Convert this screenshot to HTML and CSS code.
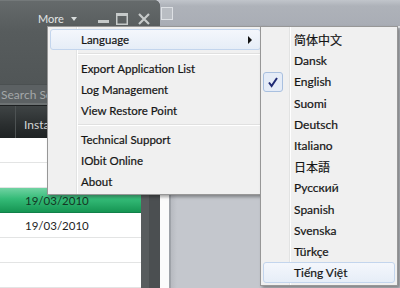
FILE: index.html
```html
<!DOCTYPE html>
<html lang="en">
<head>
    <meta charset="UTF-8">
    <meta name="viewport" content="width=device-width, initial-scale=1.0">
    <title>Uninstaller - More menu</title>
    <link rel="stylesheet" href="styles.css">
</head>
<body>
    <div class="desk">
        <!-- Main app window (left) -->
        <div class="app">
            <div class="app-head">
                <div class="titlebar">
                    <span class="more">More</span>
                    <span class="caret"></span>
                    <svg class="winbtn btn-min" width="12" height="12" viewBox="0 0 12 12"><rect x="0" y="7" width="11" height="3" fill="#c6caca"/></svg>
                    <svg class="winbtn btn-max" width="12" height="12" viewBox="0 0 12 12"><rect x="0.75" y="0.75" width="10.5" height="10.5" fill="none" stroke="#c6caca" stroke-width="1.5"/><rect x="0" y="0" width="12" height="3" fill="#c6caca"/></svg>
                    <svg class="winbtn btn-close" width="12" height="12" viewBox="0 0 12 12"><path d="M1 1 L11 11 M11 1 L1 11" stroke="#c6caca" stroke-width="2.2"/></svg>
                </div>
                <div class="search">Search Software</div>
                <div class="colhead">
                    <span class="col-check"></span>
                    <span class="col-date">Installed Date</span>
                </div>
            </div>
            <div class="app-body">
                <div class="rows">
                    <div class="row"></div>
                    <div class="row"></div>
                    <div class="row selected">19/03/2010</div>
                    <div class="row">19/03/2010</div>
                    <div class="row"></div>
                    <div class="row"></div>
                </div>
                <div class="scroll"><div class="scroll-thumb"></div></div>
            </div>
        </div>

        <!-- Window behind (right) -->
        <div class="back">
            <div class="back-title"><span class="back-max"></span></div>
            <div class="back-body">
                <div class="back-strip"></div>
                <div class="back-pane"></div>
            </div>
        </div>

        <!-- More menu -->
        <div class="menu main-menu">
            <div class="item active"><span class="gutter"></span><span class="label">Language</span><span class="arrow"></span></div>
            <div class="sep"></div>
            <div class="item"><span class="gutter"></span><span class="label">Export Application List</span></div>
            <div class="item"><span class="gutter"></span><span class="label">Log Management</span></div>
            <div class="item"><span class="gutter"></span><span class="label">View Restore Point</span></div>
            <div class="sep"></div>
            <div class="item"><span class="gutter"></span><span class="label">Technical Support</span></div>
            <div class="item"><span class="gutter"></span><span class="label">IObit Online</span></div>
            <div class="item"><span class="gutter"></span><span class="label">About</span></div>
        </div>

        <!-- Language submenu -->
        <div class="menu sub-menu">
            <div class="item"><span class="gutter"></span><span class="label cjk-sc">简体中文</span></div>
            <div class="item"><span class="gutter"></span><span class="label">Dansk</span></div>
            <div class="item"><span class="gutter"><span class="check"><svg width="20" height="20" viewBox="0 0 20 20"><path d="M6 10.5 L8.6 14 L14 6" fill="none" stroke="#1f2a74" stroke-width="2"/></svg></span></span><span class="label">English</span></div>
            <div class="item"><span class="gutter"></span><span class="label">Suomi</span></div>
            <div class="item"><span class="gutter"></span><span class="label">Deutsch</span></div>
            <div class="item"><span class="gutter"></span><span class="label">Italiano</span></div>
            <div class="item"><span class="gutter"></span><span class="label cjk-jp">日本語</span></div>
            <div class="item"><span class="gutter"></span><span class="label">Русский</span></div>
            <div class="item"><span class="gutter"></span><span class="label">Spanish</span></div>
            <div class="item"><span class="gutter"></span><span class="label">Svenska</span></div>
            <div class="item"><span class="gutter"></span><span class="label">Türkçe</span></div>
            <div class="item active"><span class="gutter"></span><span class="label">Tiếng Việt</span></div>
        </div>
    </div>
</body>
</html>
```

FILE: styles.css
```css
* {
    box-sizing: border-box;
}
body {
    margin: 0;
    width: 400px;
    height: 288px;
    overflow: hidden;
    font-family: Lato, "Noto Sans", "Noto Sans CJK SC", sans-serif;
    background: #c4c7cd;
}
.desk {
    position: relative;
    display: flex;
    width: 400px;
    height: 288px;
}

/* left app window */
.app {
    width: 160px;
    display: flex;
    flex-direction: column;
    border-top-right-radius: 6px;
    overflow: hidden;
    background: #53585a;
}
.app-head {
    height: 156px;
    display: flex;
    flex-direction: column;
    background: linear-gradient(#656a6b, #575c5d 30px, #4f5455 100px);
    border-top: 1px solid #74797a;
}
.titlebar {
    height: 35px;
    display: flex;
    align-items: center;
    padding-left: 38px;
    color: #e2e5e5;
    font-size: 11px;
}
.caret {
    width: 0;
    height: 0;
    margin-left: 7px;
    border-left: 3.5px solid transparent;
    border-right: 3.5px solid transparent;
    border-top: 4px solid #d8dcdc;
}
.winbtn {
    display: block;
}
.btn-min {
    margin-left: 21px;
}
.btn-max {
    margin-left: 6px;
}
.btn-close {
    margin-left: 10px;
}
.search {
    margin-top: auto;
    height: 21px;
    line-height: 20px;
    padding-left: 1px;
    font-size: 12px;
    color: #a4a8a9;
    background: #5c6163;
    border-top: 1px solid #4b5051;
    border-bottom: 2px solid #6d7273;
    white-space: nowrap;
}
.colhead {
    height: 33px;
    display: flex;
    background: linear-gradient(#3f4445, #2a2e2f 60%, #1f2324);
    border-top: 1px solid #1c1f20;
    color: #d2d5d5;
    font-size: 12px;
}
.col-check {
    width: 16px;
    border-right: 1px solid #4d5253;
}
.col-date {
    padding: 12px 0 0 8px;
    line-height: 14px;
    white-space: nowrap;
}
.app-body {
    flex: 1;
    display: flex;
}
.rows {
    width: 141px;
    background: #fff;
}
.row {
    height: 25px;
    line-height: 25px;
    padding-left: 25px;
    border-bottom: 1px solid #e3e4e4;
    font-size: 11.5px;
    color: #1e1e1e;
}
.row.selected {
    background: linear-gradient(#71d3a3, #34bb77 45%, #169553);
    border-bottom-color: #118049;
    color: #153624;
}
.scroll {
    width: 19px;
    display: flex;
    background: #4b4f51;
}
.scroll-thumb {
    width: 8px;
    background: #585c5e;
}

/* window in the background */
.back {
    flex: 1;
    display: flex;
    flex-direction: column;
}
.back-title {
    height: 28px;
    padding: 7px 0 0 1px;
    background: linear-gradient(#c1c5cb, #aeb2b9 6px, #a9adb5);
    border-bottom: 2px solid #e9ebee;
}
.back-max {
    display: block;
    width: 12px;
    height: 13px;
    border: 1px solid #dde0e4;
    background: #b9bdc3;
}
.back-body {
    flex: 1;
    display: flex;
}
.back-strip {
    width: 11px;
    background: #fbfbfb;
    border-right: 2px solid #9ea2a8;
}
.back-pane {
    flex: 1;
    background: linear-gradient(90deg, #b7bac0, #c4c7cd 6px);
}

/* popup menus */
.menu {
    position: absolute;
    padding: 2px;
    background: #f0f0f0 linear-gradient(90deg, transparent 28px, #e2e3e3 28px, #e2e3e3 29px, #fff 29px, #fff 30px, transparent 30px);
    border: 1px solid #979797;
    box-shadow: 2px 2px 3px rgba(0, 0, 0, 0.35);
    font-size: 11.5px;
    color: #151515;
    -webkit-text-stroke: 0.2px #151515;
}
.main-menu {
    left: 47px;
    top: 26px;
    width: 217px;
}
.sub-menu {
    left: 260px;
    top: 26px;
    width: 138px;
    font-size: 12px;
}
.item {
    display: flex;
    align-items: center;
    height: 21px;
    border: 1px solid transparent;
    border-radius: 3px;
    white-space: nowrap;
}
.sub-menu .item {
    height: 21.2px;
}
.item.active {
    background: linear-gradient(#f4f7fc, #e6edf7);
    border-color: #c3d5ed;
}
.gutter {
    width: 30px;
    flex: none;
    display: flex;
    align-items: center;
}
.check {
    display: block;
    width: 20px;
    height: 20px;
    margin-left: -1px;
    border: 1px solid #a9c0df;
    border-radius: 3px;
    background: #e5ecf7;
}
.check svg {
    display: block;
    margin: -1px;
}
.arrow {
    margin-left: auto;
    margin-right: 8px;
    width: 0;
    height: 0;
    border-top: 4px solid transparent;
    border-bottom: 4px solid transparent;
    border-left: 4px solid #111;
}
.sep {
    height: 8px;
    margin-left: 28px;
    padding-top: 3px;
}
.sep::after {
    content: "";
    display: block;
    border-top: 1px solid #e0e0e0;
    border-bottom: 1px solid #fff;
}
.cjk-sc {
    font-family: "Noto Sans CJK SC", sans-serif;
}
.cjk-jp {
    font-family: "Noto Sans CJK JP", sans-serif;
}
```
